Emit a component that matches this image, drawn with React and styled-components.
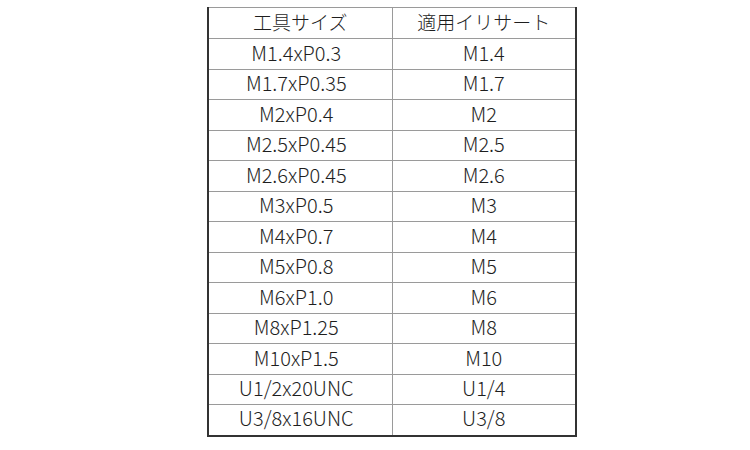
import React from "react";
import styled, { createGlobalStyle } from "styled-components";

const rows = [
  ["M1.4xP0.3", "M1.4"],
  ["M1.7xP0.35", "M1.7"],
  ["M2xP0.4", "M2"],
  ["M2.5xP0.45", "M2.5"],
  ["M2.6xP0.45", "M2.6"],
  ["M3xP0.5", "M3"],
  ["M4xP0.7", "M4"],
  ["M5xP0.8", "M5"],
  ["M6xP1.0", "M6"],
  ["M8xP1.25", "M8"],
  ["M10xP1.5", "M10"],
  ["U1/2x20UNC", "U1/4"],
  ["U3/8x16UNC", "U3/8"],
];

function App() {
  return (
    <>
      <GlobalStyle />
      <Page>
        <Table>
          <thead>
            <Row>
              <Head>工具サイズ</Head>
              <Head>適用イリサート</Head>
            </Row>
          </thead>
          <tbody>
            {rows.map(([tool, insert]) => (
              <Row key={tool}>
                <Cell>{tool}</Cell>
                <Cell>{insert}</Cell>
              </Row>
            ))}
          </tbody>
        </Table>
      </Page>
    </>
  );
}

export default App;

const GlobalStyle = createGlobalStyle`
  body {
    margin: 0;
    background: #fff;
    font-family: "Noto Sans CJK JP", "Noto Sans", sans-serif;
  }
`;

const Page = styled.main`
  width: 750px;
  height: 450px;
  padding: 7px 0 0 207px;
  box-sizing: border-box;
  display: flex;
  align-items: flex-start;
`;

const Table = styled.table`
  width: 370px;
  border-collapse: collapse;
  border-top: 1px solid #9a9a9a;
  border-left: 2px solid #333;
  border-right: 2px solid #333;
  border-bottom: 2px solid #333;
  table-layout: fixed;
`;

const Row = styled.tr`
  height: 31px;
  &:nth-child(even) {
    height: 30px;
  }
`;

const Head = styled.th`
  font-weight: 300;
  font-size: 19px;
  color: #1e1e1e;
  padding: 0 0 3px;
  text-align: center;
  border-bottom: 1px solid #9a9a9a;
  border-left: 1px solid #9a9a9a;
  line-height: 1;
  &:first-child {
    border-left: none;
  }
`;

const Cell = styled.td`
  font-weight: 300;
  font-size: 20px;
  color: #1e1e1e;
  padding: 0 0 3px;
  text-align: center;
  border-bottom: 1px solid #9a9a9a;
  border-left: 1px solid #9a9a9a;
  line-height: 1;
  &:first-child {
    border-left: none;
    padding-right: 8px;
  }
`;
